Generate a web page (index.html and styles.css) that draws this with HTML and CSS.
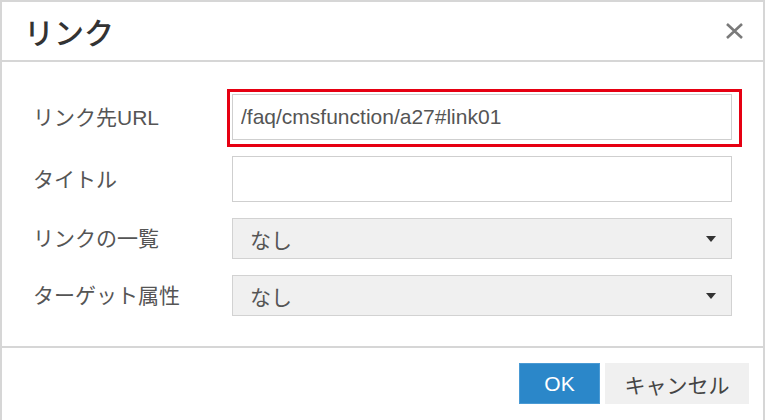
FILE: index.html
```html
<!DOCTYPE html>
<html lang="ja">
<head>
<meta charset="utf-8">
<title>リンク</title>
<link rel="stylesheet" href="styles.css">
</head>
<body>
<div class="dialog">
  <div class="header">
    <h1 class="title">リンク</h1>
    <button class="close" aria-label="閉じる">
      <svg width="19" height="18" viewBox="0 0 19 18"><path d="M2 2 L17 16 M17 2 L2 16" stroke="#7a7a7a" stroke-width="2.6" stroke-linecap="butt" fill="none"/></svg>
    </button>
  </div>
  <div class="body">
    <div class="form">
      <label class="label">リンク先URL</label>
      <div class="field highlighted">
        <input class="text" type="text" value="/faq/cmsfunction/a27#link01">
        <span class="mark"></span>
      </div>
      <label class="label">タイトル</label>
      <div class="field">
        <input class="text" type="text" value="">
      </div>
      <label class="label">リンクの一覧</label>
      <div class="field">
        <div class="select"><span>なし</span><svg width="10" height="6" viewBox="0 0 10 6"><path d="M0 0 H10 L5 6 Z" fill="#333"/></svg></div>
      </div>
      <label class="label">ターゲット属性</label>
      <div class="field">
        <div class="select"><span>なし</span><svg width="10" height="6" viewBox="0 0 10 6"><path d="M0 0 H10 L5 6 Z" fill="#333"/></svg></div>
      </div>
    </div>
  </div>
  <div class="footer">
    <button class="btn ok">OK</button>
    <button class="btn cancel">キャンセル</button>
  </div>
</div>
</body>
</html>
```
FILE: styles.css
```css
* { box-sizing: border-box; }
html, body { margin: 0; padding: 0; background: #fff; }
body {
  font-family: "Liberation Sans", "Noto Sans CJK JP", sans-serif;
  color: #555;
  overflow: hidden;
}
.dialog {
  width: 765px;
  height: 440px;
  border: 2px solid #d6d6d6;
  border-bottom: none;
  background: #fff;
}
.header {
  height: 60px;
  border-bottom: 2px solid #d6d6d6;
  display: flex;
  align-items: center;
  justify-content: space-between;
  padding: 0 18px 0 22px;
}
.title {
  margin: 0;
  font-size: 30px;
  font-weight: 500;
  color: #333;
  line-height: 1;
  font-family: "Noto Sans CJK JP", sans-serif;
}
.close {
  border: none;
  background: none;
  padding: 0;
  width: 21px;
  height: 20px;
  display: flex;
  align-items: center;
  justify-content: center;
}
.body {
  padding: 32px 30px 30px 31px;
  border-bottom: 2px solid #d6d6d6;
}
.form {
  display: grid;
  grid-template-columns: 199px 500px;
  row-gap: 16px;
  align-items: center;
}
.label {
  font-size: 21px;
  color: #555;
  line-height: 1;
}
.field { position: relative; }
.text {
  display: block;
  width: 100%;
  height: 46px;
  border: 1px solid #cfcfcf;
  padding: 0 8px;
  font-family: "Liberation Sans", "Noto Sans CJK JP", sans-serif;
  font-size: 21px;
  color: #555;
  background: #fff;
  outline: none;
}
.mark {
  position: absolute;
  left: -5px;
  top: -5px;
  right: -10px;
  bottom: -7px;
  border: 3px solid #e60012;
  pointer-events: none;
}
.select {
  height: 41px;
  border: 1px solid #d2d2d2;
  background: #f0f0f0;
  display: flex;
  align-items: center;
  justify-content: space-between;
  padding: 0 15px 0 17px;
  font-size: 21px;
  color: #555;
}
.footer {
  display: flex;
  justify-content: flex-end;
  gap: 5px;
  padding: 15px 14px 0 0;
}
.btn {
  height: 41px;
  border: none;
  font-family: "Liberation Sans", "Noto Sans CJK JP", sans-serif;
  font-size: 21px;
  padding: 0;
}
.ok {
  width: 81px;
  background: #2b87c9;
  color: #fff;
  border: 1px solid #4a9ad4;
}
.cancel {
  width: 144px;
  background: #f0f0f0;
  color: #444;
}
```
